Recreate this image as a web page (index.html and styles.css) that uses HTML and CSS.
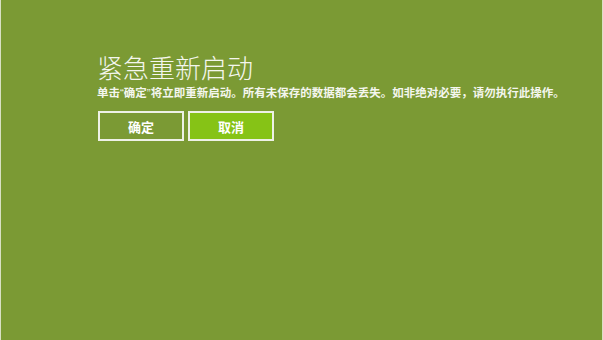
FILE: index.html
```html
<!DOCTYPE html>
<html lang="zh-CN">
<head>
<meta charset="utf-8">
<link rel="stylesheet" href="styles.css">
</head>
<body>
<div class="screen">
  <div class="dialog">
    <h1 class="title">紧急重新启动</h1>
    <p class="message">单击<span class="q">“</span>确定<span class="q">”</span>将立即重新启动。所有未保存的数据都会丢失。如非绝对必要，请勿执行此操作。</p>
    <div class="actions">
      <button class="btn btn-ok">确定</button>
      <button class="btn btn-cancel">取消</button>
    </div>
  </div>
</div>
</body>
</html>
```

FILE: styles.css
```css
html, body {
  margin: 0;
  padding: 0;
  height: 100%;
}
body {
  background: #7b9a34;
  font-family: "Noto Sans CJK SC", "Noto Sans", sans-serif;
  color: #ffffff;
}
.screen {
  box-sizing: border-box;
  height: 340px;
  width: 603px;
  border-left: 1px solid #d8e0c4;
  border-right: 1px solid #d8e0c4;
  padding: 49px 0 0 96px;
}
.title {
  margin: 0;
  font-size: 26px;
  font-weight: 300;
  line-height: 36px;
  color: #f4f6ee;
}
.message {
  margin: 0;
  font-size: 11.5px;
  font-weight: 700;
  line-height: 14px;
  color: #f4f6ee;
  white-space: nowrap;
}
.q {
  font-family: "Liberation Sans", sans-serif;
  font-weight: 400;
}
.actions {
  display: flex;
  gap: 4px;
  margin-top: 11px;
  padding-left: 1px;
}
.btn {
  box-sizing: border-box;
  width: 86px;
  height: 30px;
  border: 2px solid #eef1e6;
  font-family: "Noto Sans CJK SC", sans-serif;
  font-size: 13px;
  font-weight: 700;
  color: #ffffff;
  padding: 0;
  cursor: pointer;
}
.btn-ok {
  background: #7b9a34;
}
.btn-cancel {
  background: #86c316;
}
```
